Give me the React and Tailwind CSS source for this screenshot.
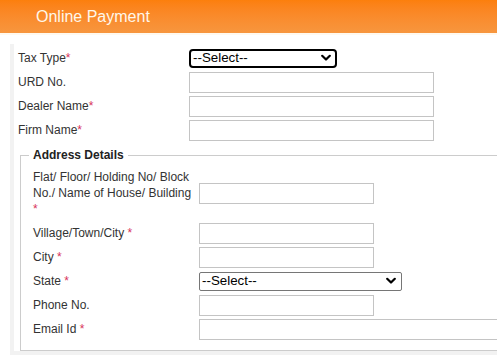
import React from "react";

const Star = ({ space }) => (
  <span className="text-[#d8325a]">{space ? " *" : "*"}</span>
);

const Chevron = () => (
  <svg width="10" height="7" viewBox="0 0 10 7" className="absolute right-[6px] top-1/2 -translate-y-1/2 pointer-events-none">
    <path d="M1.2 1.2 L5 5 L8.8 1.2" fill="none" stroke="#000" strokeWidth="2.2" strokeLinecap="round" strokeLinejoin="round" />
  </svg>
);

const Select = ({ width, focused }) => (
  <div className="relative" style={{ width }}>
    <select
      className={
        "appearance-none w-full bg-white text-black text-[13.33px] leading-none pl-[2px] " +
        (focused
          ? "h-[19px] border-2 border-black rounded-[4px]"
          : "h-[19px] border border-[#767676] rounded-[2px]")
      }
    >
      <option>--Select--</option>
    </select>
    <Chevron />
  </div>
);

const Input = ({ width = 245 }) => (
  <input
    type="text"
    className="h-[21px] bg-white border border-[#c4c4c4] outline-none"
    style={{ width }}
  />
);

const Row = ({ label, children, col }) => (
  <div className="flex items-center h-6">
    <div className={col + " shrink-0"}>{label}</div>
    {children}
  </div>
);

export default function App() {
  return (
    <div className="w-[497px] h-[355px] overflow-hidden bg-white text-[12px] leading-4 text-[#333]" style={{ fontFamily: '"Liberation Sans", Arial, sans-serif' }}>
      {/* header bar */}
      <div className="h-[33px] bg-gradient-to-b from-[#fc7f0c] to-[#f7963e] flex items-center pl-[36px]">
        <span className="text-[16px] text-[#fff7ea]">Online Payment</span>
      </div>
      <div className="h-[2px] bg-[#fff9ef]" />

      {/* form panel */}
      <div className="ml-[10px] mt-[9px] border-l-4 border-b-4 border-[#f2f2f2] pl-1 pt-[2px]">
        <Row col="w-[171px]" label={<>Tax Type<Star /></>}>
          <Select width={148} focused />
        </Row>
        <Row col="w-[171px]" label="URD No.">
          <Input />
        </Row>
        <Row col="w-[171px]" label={<>Dealer Name<Star /></>}>
          <Input />
        </Row>
        <Row col="w-[171px]" label={<>Firm Name<Star /></>}>
          <Input />
        </Row>

        <fieldset className="ml-[2px] mt-[5px] border border-[#cccccc] pl-[12px] pb-[9px] w-[500px]">
          <legend className="-ml-[4px] px-[4px] font-bold text-[12px] leading-4 text-[#222]">Address Details</legend>
          <div className="flex items-center pt-[6px]">
            <div className="w-[166px] shrink-0">
              <div className="whitespace-nowrap">Flat/ Floor/ Holding No/ Block</div>
              <div className="whitespace-nowrap">No./ Name of House/ Building</div>
              <Star />
            </div>
            <Input width={175} />
          </div>
          <div className="mt-[4px]">
            <Row col="w-[166px]" label={<>Village/Town/City<Star space /></>}>
              <Input width={175} />
            </Row>
            <Row col="w-[166px]" label={<>City<Star space /></>}>
              <Input width={175} />
            </Row>
            <Row col="w-[166px]" label={<>State<Star space /></>}>
              <Select width={203} />
            </Row>
            <Row col="w-[166px]" label="Phone No.">
              <Input width={175} />
            </Row>
            <Row col="w-[166px]" label={<>Email Id<Star space /></>}>
              <Input width={310} />
            </Row>
          </div>
        </fieldset>
      </div>
    </div>
  );
}
